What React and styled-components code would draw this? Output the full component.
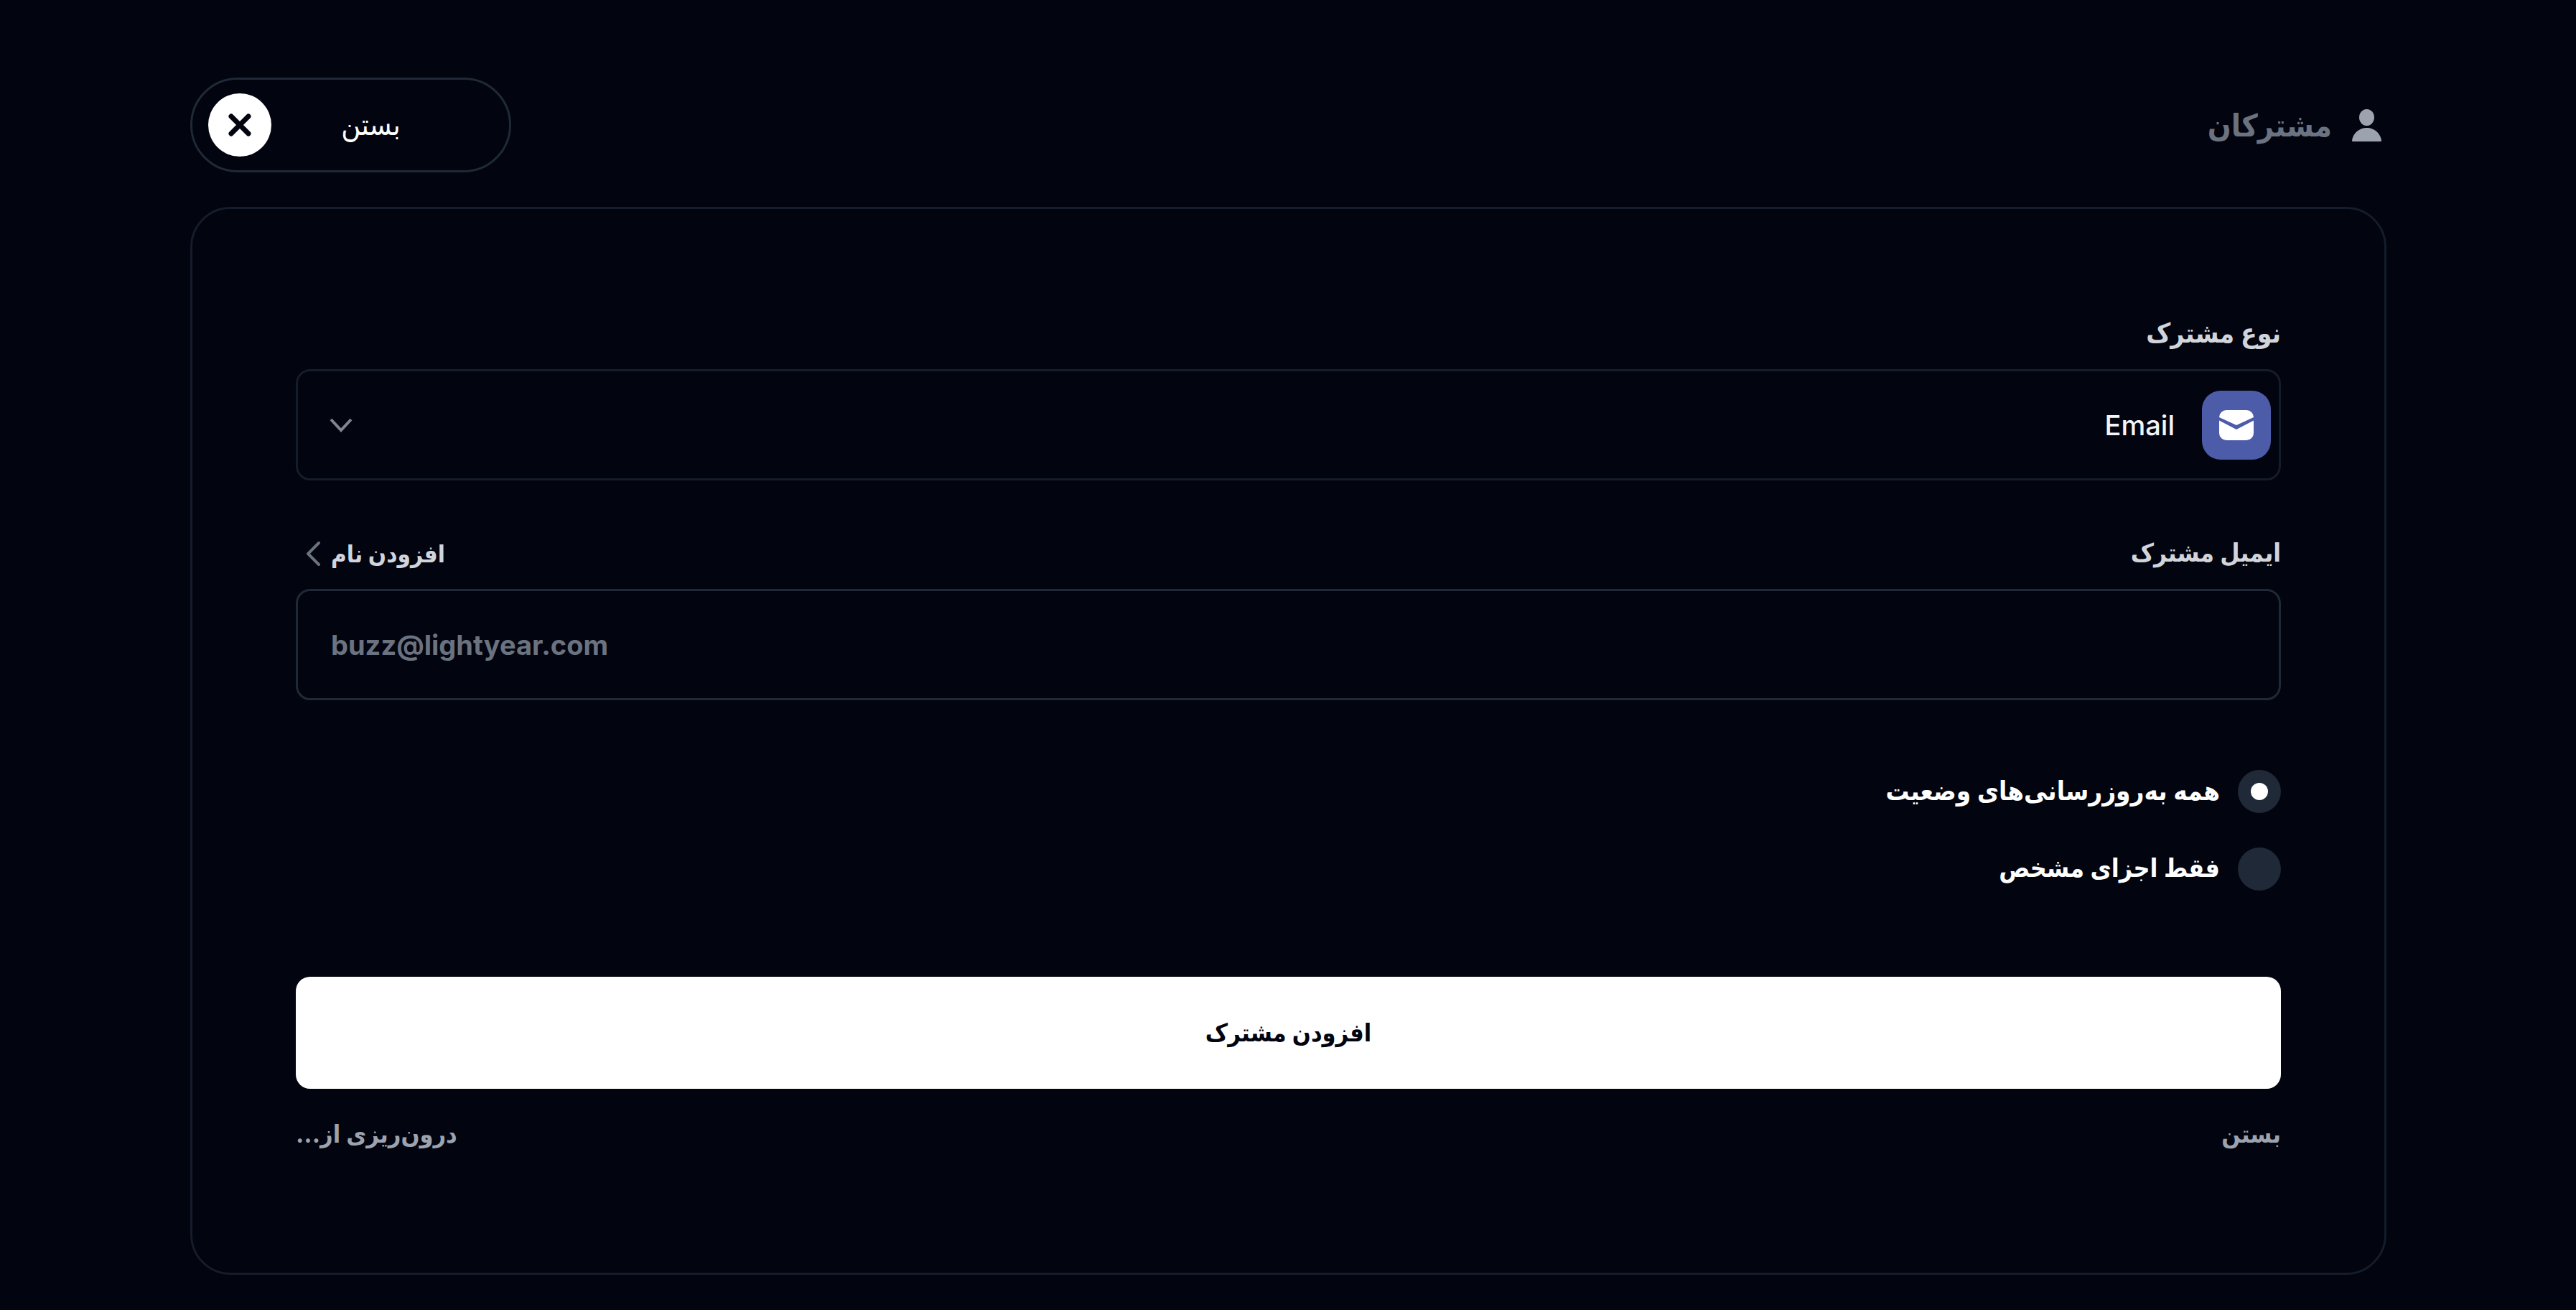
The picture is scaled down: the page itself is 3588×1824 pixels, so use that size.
import styled, { createGlobalStyle } from "styled-components";

const GlobalStyle = createGlobalStyle`
  html, body {
    margin: 0;
    background: #02040f;
  }
  * {
    box-sizing: border-box;
  }
  body {
    font-family: Inter, "DejaVu Sans Condensed", "DejaVu Sans", sans-serif;
  }
`;

const Page = styled.div`
  width: 3588px;
  height: 1824px;
  padding: 108px 264px 0 265px;
  overflow: hidden;
`;

const Header = styled.header`
  display: flex;
  align-items: center;
  justify-content: space-between;
  direction: rtl;
  height: 132px;
  margin-bottom: 48px;
`;

const Title = styled.div`
  display: flex;
  align-items: center;
  gap: 28px;
  padding-right: 7px;
  font-size: 43px;
  font-weight: 700;
  color: #6b7280;
`;

const CloseButton = styled.button`
  display: flex;
  align-items: center;
  direction: ltr;
  width: 447px;
  height: 132px;
  padding: 0 54px 0 22px;
  background: transparent;
  border: 3px solid #1f2937;
  border-radius: 66px;
  color: #fff;
  font: inherit;
  font-size: 41px;
`;

const CloseCircle = styled.span`
  display: flex;
  align-items: center;
  justify-content: center;
  width: 88px;
  height: 88px;
  border-radius: 50%;
  background: #fff;
  color: #02040f;
`;

const CloseLabel = styled.span`
  flex: 1;
  padding-bottom: 3px;
  text-align: center;
`;

const Card = styled.main`
  direction: rtl;
  height: 1487px;
  padding: 146px 144px 0;
  border: 3px solid #151c2b;
  border-radius: 56px;
`;

const LabelRow = styled.div`
  display: flex;
  align-items: center;
  justify-content: space-between;
  height: 55px;
  margin-bottom: 22px;
`;

const Label = styled.label`
  padding-bottom: 3px;
  font-size: ${(props) => props.$size || 37}px;
  font-weight: 700;
  color: #d1d5db;
`;

const AddName = styled.span`
  display: flex;
  align-items: center;
  gap: 15px;
  padding-left: 15px;
  font-size: 33px;
  font-weight: 700;
  color: #d1d5db;
`;

const Select = styled.div`
  display: flex;
  align-items: center;
  height: 155px;
  margin-bottom: 74px;
  padding: 0 11px;
  border: 3px solid #151c2b;
  border-radius: 20px;
`;

const IconTile = styled.span`
  display: flex;
  align-items: center;
  justify-content: center;
  width: 96px;
  height: 96px;
  border-radius: 26px;
  background: #4c5ca8;
`;

const SelectText = styled.span`
  margin-right: 38px;
  font-size: 38px;
  font-weight: 500;
  color: #f3f4f6;
`;

const SelectChevron = styled.span`
  display: flex;
  margin-right: auto;
  padding-left: 33px;
  color: #7f8592;
`;

const Input = styled.input`
  display: block;
  width: 100%;
  height: 155px;
  padding: 0 46px;
  direction: ltr;
  background: transparent;
  border: 3px solid #1f2937;
  border-radius: 20px;
  font-family: inherit;
  font-size: 38px;
  font-weight: 700;
  color: #fff;
  outline: none;

  &::placeholder {
    color: #6b7280;
    opacity: 1;
  }
`;

const RadioGroup = styled.div`
  display: flex;
  flex-direction: column;
  gap: 48px;
  margin-top: 97px;
`;

const RadioRow = styled.div`
  display: flex;
  align-items: center;
  gap: 25px;
  font-size: ${(props) => props.$size}px;
  font-weight: 700;
  color: #fff;
`;

const RadioText = styled.span`
  padding-bottom: 3px;
`;

const RadioDot = styled.span`
  display: flex;
  align-items: center;
  justify-content: center;
  width: 60px;
  height: 60px;
  border-radius: 50%;
  background: #1f2937;

  &::after {
    content: "";
    display: ${(props) => (props.$checked ? "block" : "none")};
    width: 24px;
    height: 24px;
    border-radius: 50%;
    background: #fff;
  }
`;

const SubmitButton = styled.button`
  display: block;
  width: 100%;
  height: 156px;
  margin-top: 120px;
  padding: 0 0 2px;
  background: #fff;
  border: 0;
  border-radius: 20px;
  font-family: inherit;
  font-size: 34px;
  font-weight: 700;
  color: #02040f;
`;

const Footer = styled.div`
  display: flex;
  align-items: center;
  justify-content: space-between;
  height: 55px;
  margin-top: 35px;
  font-size: 34px;
  font-weight: 700;
  color: #9ca3af;
`;

const UserIcon = () => (
  <svg width="41" height="45" viewBox="0 0 41 45" fill="#9ca3af">
    <ellipse cx="20.5" cy="11.500" rx="10.500" ry="11.500" />
    <path d="M1.500 45C.5 45 0 44.400 0 43.400 1.500 33.500 10 26 20.500 26S39.500 33.500 41 43.400c0 1-.5 1.600-1.500 1.600z" />
  </svg>
);

const XIcon = () => (
  <svg width="32" height="32" viewBox="0 0 32 32" fill="none" stroke="currentColor" strokeWidth="7" strokeLinecap="round">
    <path d="M4 4l24 24M28 4L4 28" />
  </svg>
);

const MailIcon = () => (
  <svg width="48" height="42" viewBox="0 0 48 42" fill="none">
    <path fill="#fff" d="M0 14.500 24 27l24-12.500V32a10 10 0 0 1-10 10H10A10 10 0 0 1 0 32z" />
    <path fill="#fff" d="M10 0h28a10 10 0 0 1 10 10L24 21 0 10A10 10 0 0 1 10 0z" />
  </svg>
);

const ChevronDown = () => (
  <svg width="32" height="20" viewBox="0 0 32 20" fill="none" stroke="currentColor" strokeWidth="4">
    <path d="M2 2l14 15L30 2" />
  </svg>
);

const ChevronLeft = () => (
  <svg width="19" height="34" viewBox="0 0 19 34" fill="none" stroke="#6b7280" strokeWidth="4" strokeLinecap="round">
    <path d="M17 2L2 17l15 15" />
  </svg>
);

export default function App() {
  return (
    <Page>
      <GlobalStyle />
      <Header>
        <Title>
          <UserIcon />
          <span>مشترکان</span>
        </Title>
        <CloseButton>
          <CloseCircle>
            <XIcon />
          </CloseCircle>
          <CloseLabel>بستن</CloseLabel>
        </CloseButton>
      </Header>

      <Card>
        <LabelRow>
          <Label>نوع مشترک</Label>
        </LabelRow>
        <Select>
          <IconTile>
            <MailIcon />
          </IconTile>
          <SelectText>Email</SelectText>
          <SelectChevron>
            <ChevronDown />
          </SelectChevron>
        </Select>

        <LabelRow>
          <Label $size={35}>ایمیل مشترک</Label>
          <AddName>
            <span>افزودن نام</span>
            <ChevronLeft />
          </AddName>
        </LabelRow>
        <Input placeholder="buzz@lightyear.com" />

        <RadioGroup>
          <RadioRow $size={36.5}>
            <RadioDot $checked />
            <RadioText>همه به‌روزرسانی‌های وضعیت</RadioText>
          </RadioRow>
          <RadioRow $size={35.5}>
            <RadioDot />
            <RadioText>فقط اجزای مشخص</RadioText>
          </RadioRow>
        </RadioGroup>

        <SubmitButton>افزودن مشترک</SubmitButton>

        <Footer>
          <span>بستن</span>
          <span>درون‌ریزی از...</span>
        </Footer>
      </Card>
    </Page>
  );
}
